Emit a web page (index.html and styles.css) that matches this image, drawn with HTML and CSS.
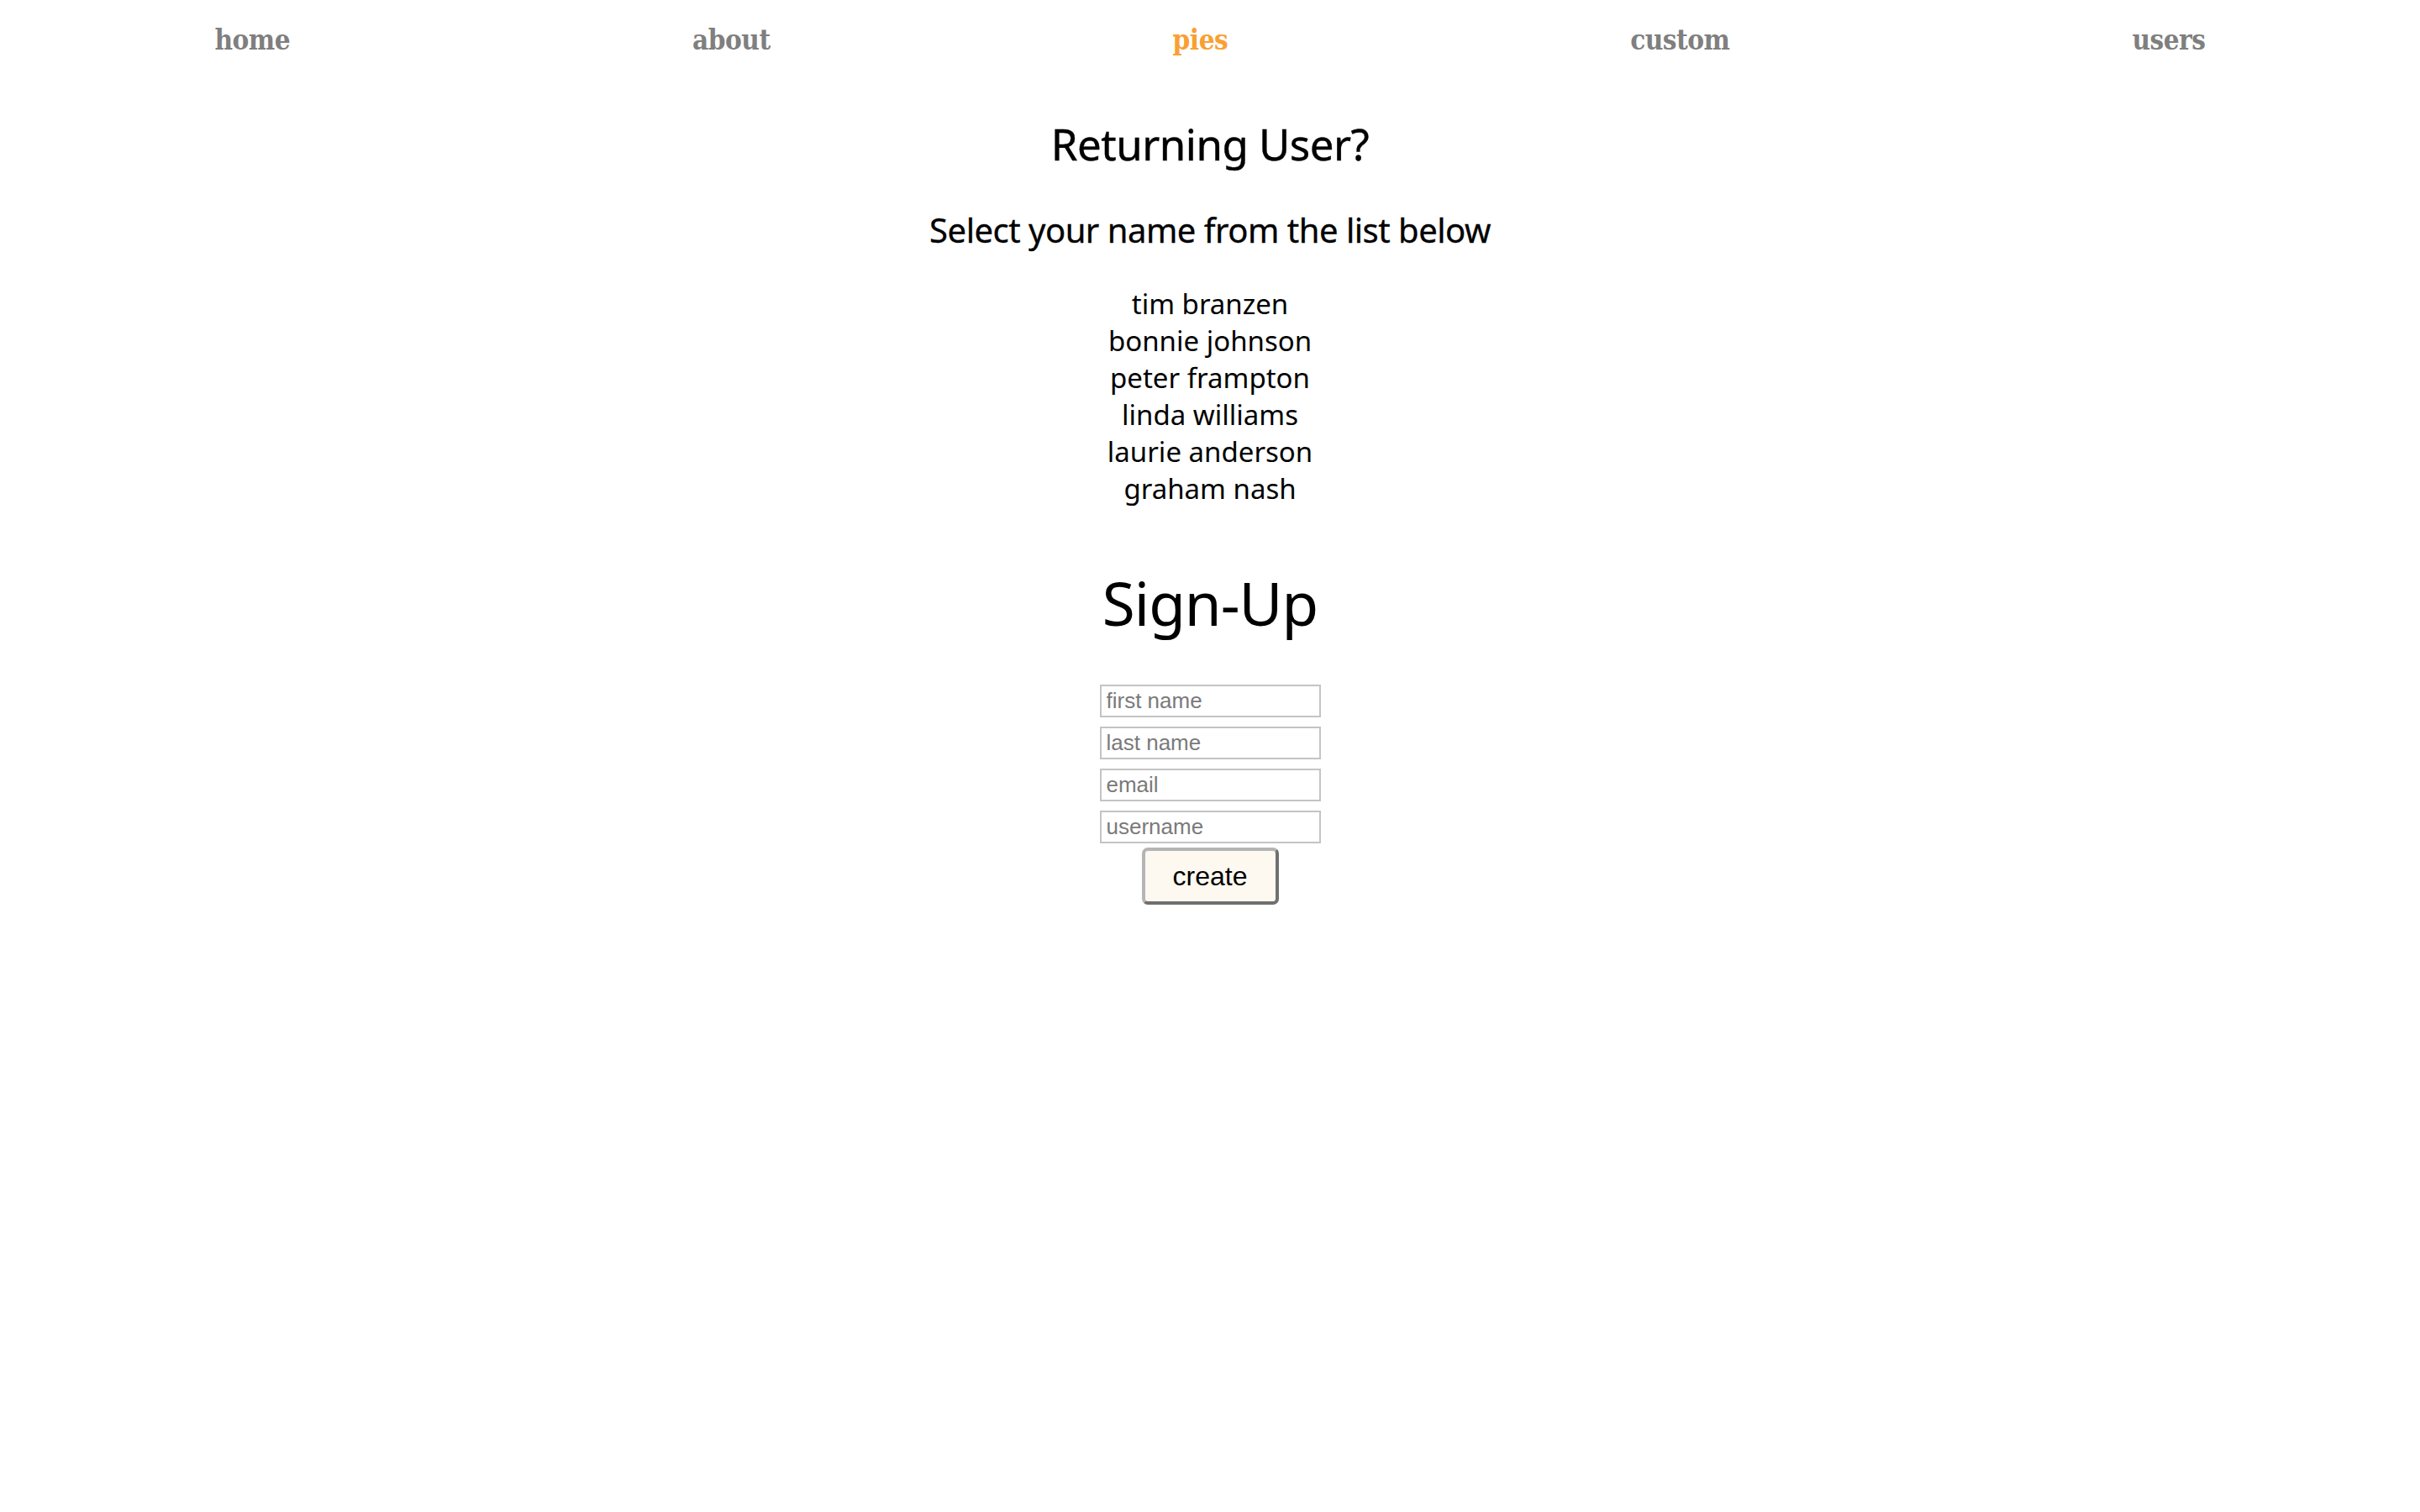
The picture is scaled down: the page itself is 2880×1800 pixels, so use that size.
FILE: index.html
```html
<!DOCTYPE html>
<html>
<head>
<meta charset="utf-8">
<title>Users</title>
<link rel="stylesheet" href="styles.css">
</head>
<body>
<nav class="nav">
  <a class="nav-link" href="#">home</a>
  <a class="nav-link" href="#">about</a>
  <a class="nav-link nav-active" href="#">pies</a>
  <a class="nav-link" href="#">custom</a>
  <a class="nav-link" href="#">users</a>
</nav>
<main class="main">
  <h2 class="title">Returning User?</h2>
  <h3 class="subtitle">Select your name from the list below</h3>
  <ul class="names">
    <li>tim branzen</li>
    <li>bonnie johnson</li>
    <li>peter frampton</li>
    <li>linda williams</li>
    <li>laurie anderson</li>
    <li>graham nash</li>
  </ul>
  <h1 class="signup">Sign-Up</h1>
  <form class="form">
    <input class="field" type="text" placeholder="first name">
    <input class="field" type="text" placeholder="last name">
    <input class="field" type="text" placeholder="email">
    <input class="field" type="text" placeholder="username">
    <button class="btn" type="button">create</button>
  </form>
</main>
</body>
</html>
```
FILE: styles.css
```css
html, body {
  margin: 0;
  padding: 0;
  background: #ffffff;
}
body {
  padding: 16px;
  font-family: "Noto Sans", "Open Sans", sans-serif;
  color: #000;
}
.nav {
  display: flex;
  justify-content: space-around;
  padding-top: 10px;
  line-height: 44px;
}
.nav-link {
  font-family: "DejaVu Serif Condensed", "DejaVu Serif", serif;
  font-weight: bold;
  font-size: 33px;
  color: #7f7f7f;
  text-decoration: none;
  letter-spacing: -0.5px;
}
.nav-active {
  color: #f9a032;
}
.main {
  display: flex;
  flex-direction: column;
  align-items: center;
  text-align: center;
}
.title {
  margin: 71px 0 0;
  font-size: 51px;
  line-height: 60px;
  font-weight: normal;
  letter-spacing: -0.5px;
  -webkit-text-stroke: 0.4px #000;
}
.subtitle {
  margin: 49px 0 0;
  font-size: 40px;
  line-height: 48px;
  font-weight: normal;
  letter-spacing: -0.5px;
  -webkit-text-stroke: 0.3px #000;
}
.names {
  list-style: none;
  margin: 42px 0 0;
  padding: 0;
  font-size: 33px;
  line-height: 44px;
}
.signup {
  margin: 70px 0 0;
  font-size: 71px;
  line-height: 88px;
  font-weight: normal;
  letter-spacing: -1px;
}
.form {
  display: flex;
  flex-direction: column;
  align-items: center;
  gap: 11px;
  margin-top: 53px;
}
.field {
  box-sizing: border-box;
  width: 263px;
  height: 39px;
  margin: 0;
  padding: 0 6px;
  border: 2px solid #c4c4c4;
  border-radius: 0;
  font-family: "Liberation Sans", Arial, sans-serif;
  font-size: 26px;
  color: #333;
  outline: none;
}
.field::placeholder {
  color: #7a7a7a;
}
.btn {
  box-sizing: border-box;
  width: 163px;
  height: 68px;
  margin-top: -6px;
  background: #fdf8f0;
  border: 4px solid;
  border-color: #b5b5b5 #707070 #707070 #b5b5b5;
  border-radius: 7px;
  font-family: "Liberation Sans", Arial, sans-serif;
  font-size: 32px;
  color: #000;
  padding: 0;
}
```
